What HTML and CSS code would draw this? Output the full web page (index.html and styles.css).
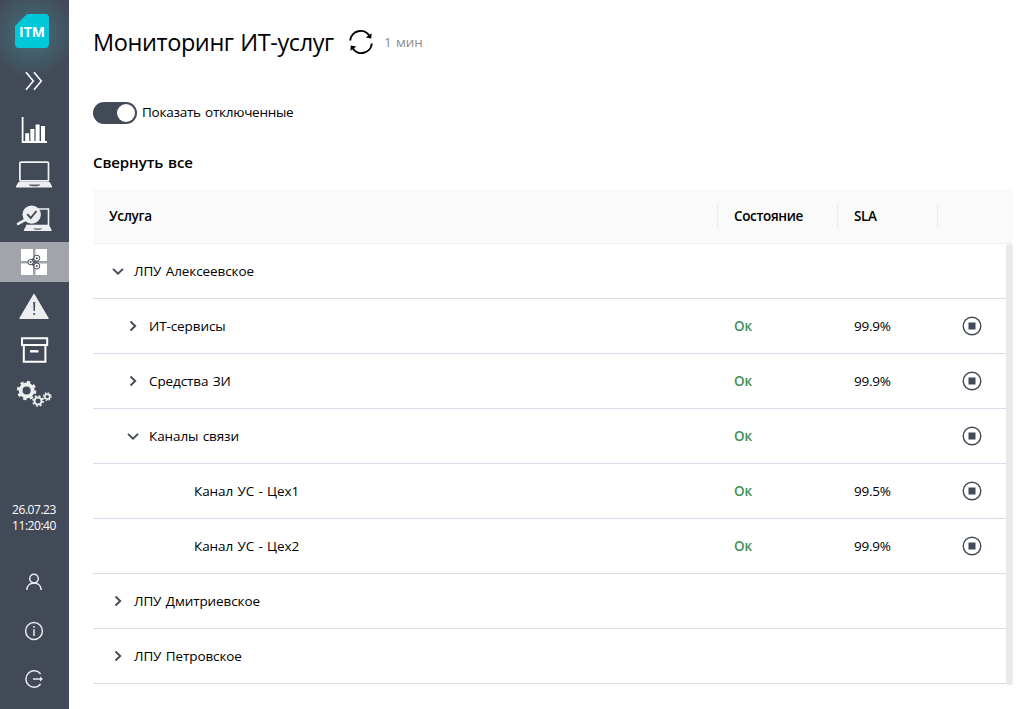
FILE: index.html
```html
<!DOCTYPE html>
<html lang="ru">
<head>
<meta charset="utf-8">
<title>Мониторинг ИТ-услуг</title>
<link rel="stylesheet" href="styles.css">
</head>
<body>
<svg class="defs" width="0" height="0">
  <symbol id="right" viewBox="0 0 12 12"><path d="M3.500 1.500 8.200 6l-4.700 4.500" fill="none" stroke="#434a57" stroke-width="1.900"/></symbol>
  <symbol id="down" viewBox="0 0 12 12"><path d="M1 3.900 6 8.700l5-4.800" fill="none" stroke="#434a57" stroke-width="1.900"/></symbol>
  <symbol id="stop" viewBox="0 0 20 20"><circle cx="10" cy="10" r="8.800" fill="none" stroke="#434a57" stroke-width="1.400"/><path d="M6.500 6.500h7v7h-7z" fill="#434a57"/></symbol>
</svg>
<div class="app">
  <aside class="sidebar">
    <div class="logo">ITM</div>
    <a class="expand"><svg width="18" height="20" viewBox="0 0 18 20" fill="none" stroke="#fff" stroke-width="1.6"><path d="M1 1.2 8.3 10 1 18.8M9 1.2 16.3 10 9 18.8"/></svg></a>
    <nav class="nav">
      <a class="item"><svg width="36" height="36" viewBox="0 0 36 36" fill="#fff"><path d="M5.7 5h1.8v24H31v2H5.7zM9.2 21.2h4V29h-4zM14.4 17h4v12h-4zM19.6 12.5h4V29h-4zM25 14h4v15h-4z"/></svg></a>
      <a class="item"><svg width="38" height="36" viewBox="0 0 38 36"><rect x="4.9" y="6.1" width="28.6" height="18.8" rx="1" fill="none" stroke="#f1f2f3" stroke-width="1.7"/><path d="M3.5 26h31.2l2.3 4.2c.2.7-.2 1.300-1 1.300H2c-.8 0-1.200-.6-1-1.300z" fill="#edeeef"/><path d="M14 28.5h11v.8l-3 .9h-5l-3-.9z" fill="#555c68"/></svg></a>
      <a class="item"><svg width="38" height="36" viewBox="0 0 38 36"><path d="M20 9h13.500v16.500H11" fill="none" stroke="#f1f2f3" stroke-width="1.6"/><path d="M11 26h23.500l2.200 4q.2 1-.8 1H9.600q-1 0-.8-1z" fill="#edeeef"/><path d="M18.500 28.400h8.500v.6l-2 .8h-4.600l-1.900-.8z" fill="#555c68"/><circle cx="16.700" cy="14.600" r="9.200" fill="#edeeef"/><path d="m10 20-7 3.800" stroke="#edeeef" stroke-width="2.600" stroke-linecap="round"/><path d="m12.200 14.200 3.500 3.800 5.800-7" fill="none" stroke="#434a57" stroke-width="1.900"/></svg></a>
      <a class="item active"><svg width="36" height="36" viewBox="0 0 36 36"><path d="M5 5h12v12H5zM19.500 5H31v12H19.500zM5 19.500h12V31H5zM19.500 19.500H31V31H19.500z" fill="#fff"/><g fill="#fff" stroke="#434a57" stroke-width="1"><path d="m14 17 6-3.500M14 19l6 3.500M20.500 15v6" stroke-width="1.700"/><circle cx="14.600" cy="18.100" r="2.700"/><circle cx="20.800" cy="14.200" r="3"/><circle cx="20.800" cy="22" r="3"/></g><g fill="#434a57"><circle cx="14.600" cy="18.100" r="1"/><circle cx="20.800" cy="14.200" r="1"/><circle cx="20.800" cy="22" r="1"/><circle cx="18.300" cy="18.100" r="1"/></g></svg></a>
      <a class="item"><svg width="36" height="36" viewBox="0 0 36 36"><path d="M18 6.500 32 30.300H4z" fill="#edeeef" stroke="#edeeef" stroke-width="1.400" stroke-linejoin="round"/><path d="M17.200 14h2l-.3 9h-1.300z" fill="#434a57"/><circle cx="18.200" cy="26" r="1.100" fill="#434a57"/></svg></a>
      <a class="item"><svg width="36" height="36" viewBox="0 0 36 36" fill="none" stroke="#fff" stroke-width="2"><path d="M6 6.200h25.200v6.800H6zM7.800 13v16.800h21.600V13"/><path d="M14 19.300h8.500" stroke-width="2.400"/></svg></a>
      <a class="item"><svg width="38" height="36" viewBox="0 0 38 36" fill="none" stroke="#edeeef"><circle cx="11.600" cy="14.500" r="6" stroke-width="3.800"/><circle cx="11.600" cy="14.500" r="8.600" stroke-width="2.300" stroke-dasharray="3.380 3.380"/><circle cx="23" cy="25" r="3.500" stroke-width="2"/><circle cx="23" cy="25" r="5.100" stroke-width="1.600" stroke-dasharray="2 2"/><circle cx="32.300" cy="20.600" r="2.500" stroke-width="1.600"/><circle cx="32.300" cy="20.600" r="3.800" stroke-width="1.300" stroke-dasharray="1.490 1.490"/></svg></a>
    </nav>
    <div class="clock"><span>26.07.23</span><span>11:20:40</span></div>
    <div class="tools">
      <svg width="20" height="20" viewBox="0 0 20 20" fill="none" stroke="#e9eaec" stroke-width="1.5"><circle cx="10" cy="6.600" r="4.300"/><path d="M2.800 18c.3-4.400 3.300-7 7.200-7s6.900 2.600 7.200 7"/></svg>
      <svg width="20" height="20" viewBox="0 0 20 20" fill="none" stroke="#e9eaec" stroke-width="1.5"><circle cx="10" cy="10" r="8.400"/><path d="M10 8.200v6.800M10 5.100v1.700"/></svg>
      <svg width="20" height="20" viewBox="0 0 20 20" fill="none" stroke="#e9eaec" stroke-width="1.5"><path d="M16.600 5A8.200 8.200 0 1 0 16.600 15M9 10h8"/><path d="m16 7.600 3 2.400-3 2.400z" fill="#e9eaec" stroke="none"/></svg>
    </div>
  </aside>
  <main class="main">
    <header class="head">
      <h1 class="title">Мониторинг ИТ-услуг</h1>
      <svg class="refresh" width="26" height="26" viewBox="0 0 26 26" fill="none" stroke="#000" stroke-width="2"><path d="M2.200 11.500A10.400 10.400 0 0 1 21.500 7M23.800 14.500A10.400 10.400 0 0 1 4.500 19"/><path d="m23.600 4.300-.4 5.300-5.500-1zM2.400 21.700l.4-5.300 5.500 1z" fill="#000" stroke="none"/></svg>
      <span class="interval">1 мин</span>
    </header>
    <label class="toggle"><span class="switch"><span class="knob"></span></span><span class="toggle-text">Показать отключенные</span></label>
    <div class="collapse"><span>Свернуть все</span></div>
    <section class="table">
      <div class="thead"><div class="cell">Услуга</div><div class="cell state">Состояние</div><div class="cell">SLA</div><div class="cell"></div></div>
      <div class="tbody">
        <div class="rows">
          <div class="row"><div class="cell name"><svg><use href="#down"/></svg><span>ЛПУ Алексеевское</span></div></div>
          <div class="row"><div class="cell name l2"><svg><use href="#right"/></svg><span>ИТ-сервисы</span></div><div class="cell ok">Ок</div><div class="cell num">99.9%</div><div class="act"><svg><use href="#stop"/></svg></div></div>
          <div class="row"><div class="cell name l2"><svg><use href="#right"/></svg><span>Средства ЗИ</span></div><div class="cell ok">Ок</div><div class="cell num">99.9%</div><div class="act"><svg><use href="#stop"/></svg></div></div>
          <div class="row"><div class="cell name l2"><svg><use href="#down"/></svg><span>Каналы связи</span></div><div class="cell ok">Ок</div><div class="cell num"></div><div class="act"><svg><use href="#stop"/></svg></div></div>
          <div class="row"><div class="cell name l3"><span>Канал УС - Цех1</span></div><div class="cell ok">Ок</div><div class="cell num">99.5%</div><div class="act"><svg><use href="#stop"/></svg></div></div>
          <div class="row"><div class="cell name l3"><span>Канал УС - Цех2</span></div><div class="cell ok">Ок</div><div class="cell num">99.9%</div><div class="act"><svg><use href="#stop"/></svg></div></div>
          <div class="row"><div class="cell name"><svg><use href="#right"/></svg><span>ЛПУ Дмитриевское</span></div></div>
          <div class="row"><div class="cell name"><svg><use href="#right"/></svg><span>ЛПУ Петровское</span></div></div>
        </div>
        <div class="scroll"></div>
      </div>
    </section>
  </main>
</div>
</body>
</html>
```
FILE: styles.css
```css
* { box-sizing: border-box; }
body { margin: 0; background: #fff; color: #000; font: 13.5px/20px "Segoe UI", "Open Sans", "Noto Sans", sans-serif; letter-spacing: -0.1px; word-spacing: 1px; }
svg { display: block; flex: none; }
.defs { position: absolute; }
.app { display: flex; height: 709px; overflow: hidden; }
.sidebar { width: 69px; flex: none; padding-right: 1px; background: radial-gradient(circle at 32px 34px, #41707c 0, #425c69 24px, #434a57 44px); display: flex; flex-direction: column; align-items: center; color: #fff; }
.logo { width: 34px; height: 34px; margin: 14px 4px 0 0; background: #00c8d8; border-radius: 4px; clip-path: polygon(12px 0, 100% 0, 100% 100%, 0 100%, 0 12px); font: 700 14px/36px "Open Sans", sans-serif; letter-spacing: 0; text-align: center; }
.expand { margin-top: 23px; }
.nav { width: 69px; margin: 19px -1px 0 0; display: flex; flex-direction: column; gap: 4px; }
.item { height: 40px; padding-right: 2px; display: flex; align-items: center; justify-content: center; }
.active { background: #a1a5ab; }
.clock { margin-top: 88px; display: flex; flex-direction: column; align-items: center; font-size: 12px; line-height: 16px; letter-spacing: -0.45px; }
.tools { margin-top: 38px; display: flex; flex-direction: column; gap: 28.5px; }
.main { flex: 1; padding: 0 20px 0 24px; }
.head { display: flex; align-items: center; height: 36px; margin-top: 24px; }
.title { margin: 0; width: 255px; font-size: 23.5px; font-weight: 400; line-height: 36px; letter-spacing: -0.4px; white-space: nowrap; }
.interval { margin-left: 10px; color: #8c8c8c; }
.toggle { display: flex; align-items: center; height: 22px; margin-top: 42px; gap: 5px; }
.toggle-text { margin-top: -2px; letter-spacing: -0.25px; }
.switch { width: 44px; height: 22px; padding: 2px; border-radius: 11px; background: #434a57; display: flex; justify-content: flex-end; }
.knob { width: 18px; height: 18px; border-radius: 50%; background: #fff; }
.collapse { height: 22px; margin-top: 27px; font-size: 15px; line-height: 22px; font-weight: 600; letter-spacing: -0.1px; }
.table { margin-top: 16px; }
.thead { height: 55px; background: #fafafa; border-bottom: 1px solid #f0f0f0; border-radius: 2px 2px 0 0; display: grid; grid-template-columns: 625px 120px 100px 1fr; align-items: center; font-weight: 600; letter-spacing: -0.35px; }
.thead .cell { height: 24px; line-height: 24px; border-right: 1px solid #ebebeb; }
.thead .cell:last-child { border: 0; }
.cell { padding-left: 16px; white-space: nowrap; }
.tbody { display: flex; }
.rows { flex: 1; }
.row { height: 55px; border-bottom: 1px solid #d9dce8; display: grid; grid-template-columns: 625px 120px 100px 1fr; align-items: center; }
.name { display: flex; align-items: center; padding-left: 19px; gap: 10px; }
.name svg { width: 12px; height: 12px; }
.l2 { padding-left: 34px; }
.l3 { padding-left: 101px; }
.ok { color: #3f9156; font-weight: 600; }
.num { letter-spacing: -0.25px; }
.act { display: flex; justify-content: center; padding-right: 1px; }
.act svg { width: 20px; height: 20px; }
.scroll { width: 7px; height: 441px; margin-top: 0; border-radius: 4px; background: #e9e9e9; }
```
